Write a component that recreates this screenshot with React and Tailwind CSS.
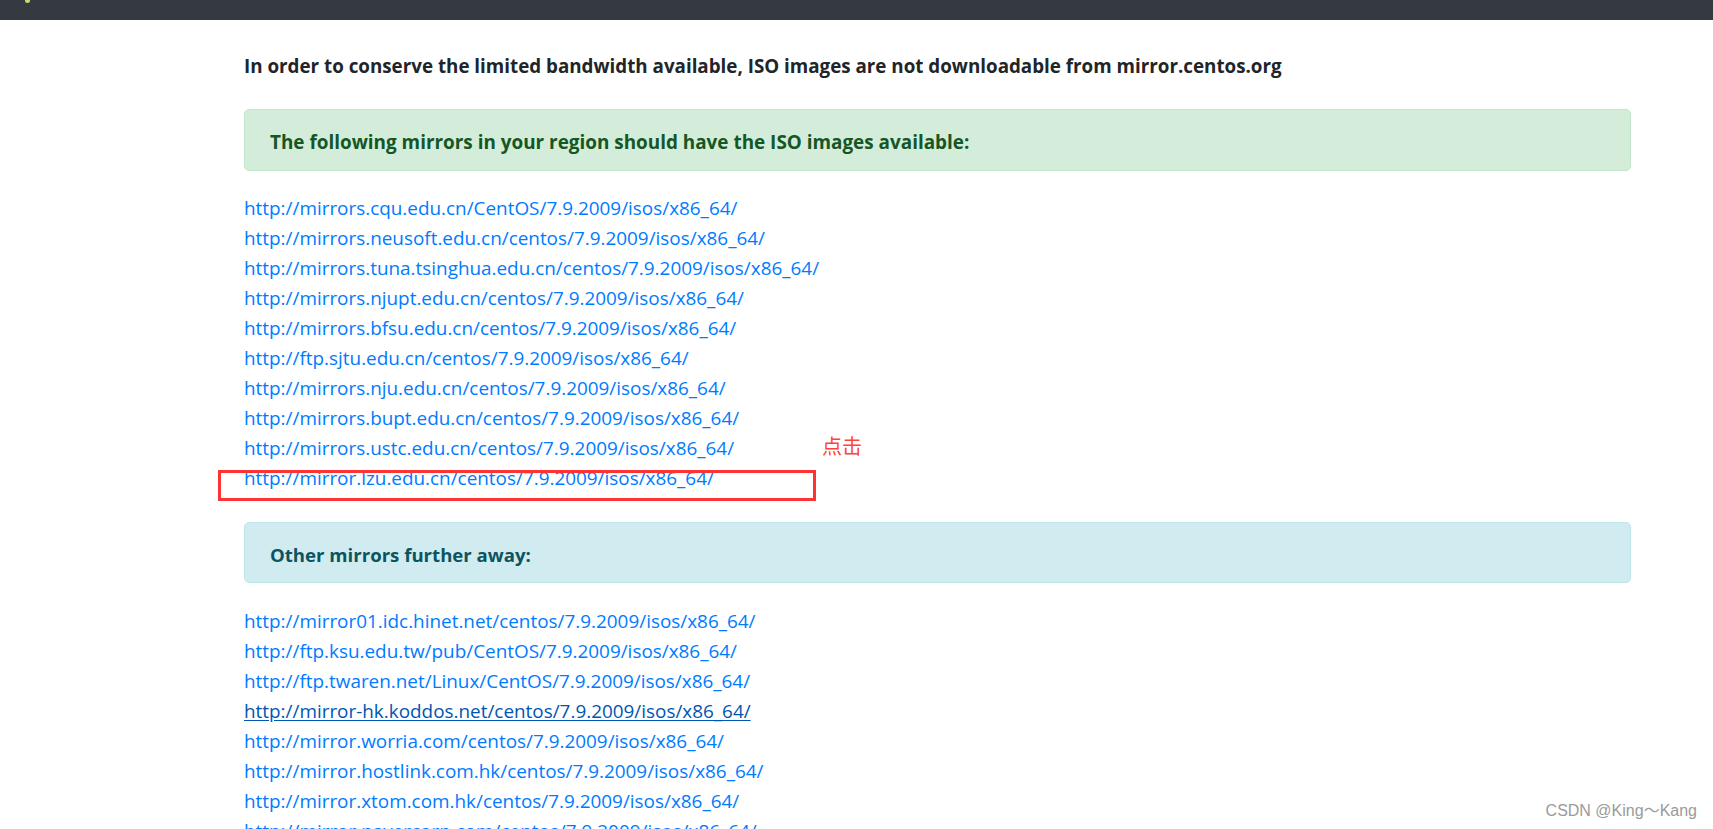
const nearMirrors = [
  "http://mirrors.cqu.edu.cn/CentOS/7.9.2009/isos/x86_64/",
  "http://mirrors.neusoft.edu.cn/centos/7.9.2009/isos/x86_64/",
  "http://mirrors.tuna.tsinghua.edu.cn/centos/7.9.2009/isos/x86_64/",
  "http://mirrors.njupt.edu.cn/centos/7.9.2009/isos/x86_64/",
  "http://mirrors.bfsu.edu.cn/centos/7.9.2009/isos/x86_64/",
  "http://ftp.sjtu.edu.cn/centos/7.9.2009/isos/x86_64/",
  "http://mirrors.nju.edu.cn/centos/7.9.2009/isos/x86_64/",
  "http://mirrors.bupt.edu.cn/centos/7.9.2009/isos/x86_64/",
  "http://mirrors.ustc.edu.cn/centos/7.9.2009/isos/x86_64/",
  "http://mirror.lzu.edu.cn/centos/7.9.2009/isos/x86_64/",
];

const farMirrors = [
  "http://mirror01.idc.hinet.net/centos/7.9.2009/isos/x86_64/",
  "http://ftp.ksu.edu.tw/pub/CentOS/7.9.2009/isos/x86_64/",
  "http://ftp.twaren.net/Linux/CentOS/7.9.2009/isos/x86_64/",
  "http://mirror-hk.koddos.net/centos/7.9.2009/isos/x86_64/",
  "http://mirror.worria.com/centos/7.9.2009/isos/x86_64/",
  "http://mirror.hostlink.com.hk/centos/7.9.2009/isos/x86_64/",
  "http://mirror.xtom.com.hk/centos/7.9.2009/isos/x86_64/",
  "http://mirror.navercorp.com/centos/7.9.2009/isos/x86_64/",
];

const MirrorList = ({ links, hovered }) => (
  <div className="flex flex-col items-start">
    {links.map((url) => (
      <a
        key={url}
        href="#"
        className={
          url === hovered
            ? "leading-[30px] text-[#0056b3] underline underline-offset-2"
            : "leading-[30px] text-[#007bff]"
        }
      >
        {url}
      </a>
    ))}
  </div>
);

const App = () => {
  return (
    <div
      className="relative h-[829px] overflow-hidden bg-white"
      style={{ fontFamily: '"Open Sans", "Liberation Sans", sans-serif' }}
    >
      {/* dark navbar, only its bottom edge is visible */}
      <div className="relative h-[20px] bg-[#343a40]">
        <div className="absolute left-[25px] top-0 h-[3px] w-[5px] rounded-b-full bg-[#c8d873]"></div>
      </div>

      <div className="ml-[244px] flex w-[1387px] flex-col pt-[33px] text-[18.9px]">
        <h5 className="text-[18.8px] font-bold leading-[26px] text-[#212529]">
          In order to conserve the limited bandwidth available, ISO images are not downloadable from mirror.centos.org
        </h5>

        <div className="mt-[30px] rounded-[5px] border border-[#c3e6cb] bg-[#d4edda] px-[25px] pb-[13px] pt-[17px]">
          <h5 className="text-[18.9px] font-bold leading-[30px] text-[#155724]">
            The following mirrors in your region should have the ISO images available:
          </h5>
        </div>

        <div className="mt-[22px]">
          <MirrorList links={nearMirrors} />
        </div>

        <div className="mt-[29px] rounded-[5px] border border-[#bee5eb] bg-[#d1ecf1] px-[25px] pb-[13px] pt-[17px]">
          <h5 className="text-[18.6px] font-bold leading-[29px] text-[#0c5460]">Other mirrors further away:</h5>
        </div>

        <div className="mt-[23px]">
          <MirrorList links={farMirrors} hovered="http://mirror-hk.koddos.net/centos/7.9.2009/isos/x86_64/" />
        </div>
      </div>

      {/* annotation drawn over the screenshot */}
      <div className="absolute left-[218px] top-[470px] h-[31px] w-[598px] border-[3px] border-[#f33]"></div>
      <div
        className="absolute left-[822px] top-[433px] text-[20px] leading-[26px] text-[#f43]"
        style={{ fontFamily: '"Noto Sans CJK SC", sans-serif' }}
      >
        点击
      </div>

      <div
        className="absolute right-[16px] top-[801px] text-[16px] leading-[20px] text-[#9a9a9a]"
        style={{ fontFamily: '"Liberation Sans", "Noto Sans CJK SC", sans-serif' }}
      >
        CSDN @King～Kang
      </div>
    </div>
  );
};

export default App;
